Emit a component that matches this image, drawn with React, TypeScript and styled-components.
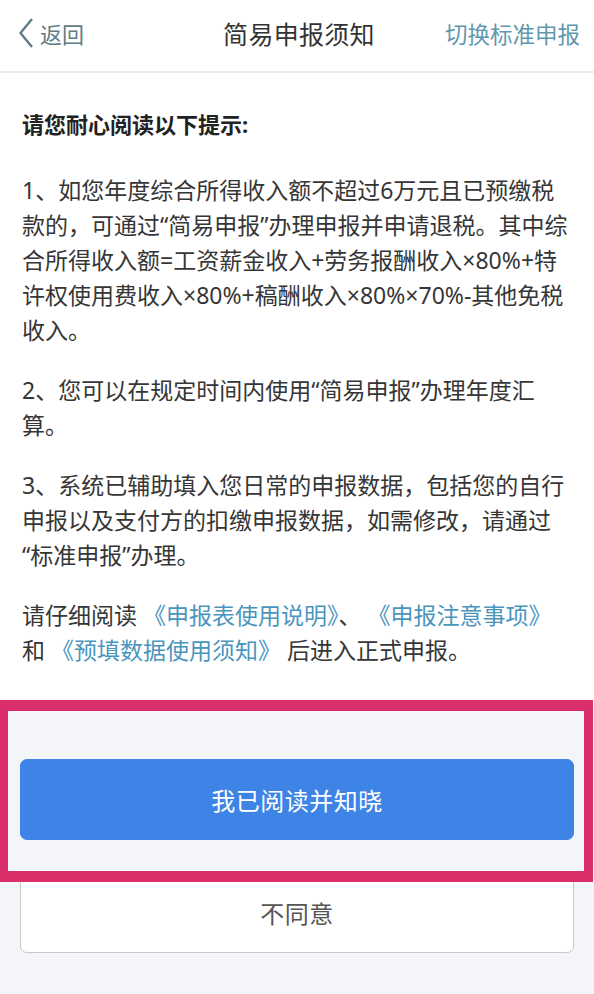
import React from 'react';
import styled, { createGlobalStyle } from 'styled-components';

const GlobalStyle = createGlobalStyle`
  html, body {
    margin: 0;
    padding: 0;
    background: #ffffff;
  }
  body {
    font-family: "Noto Sans", "Noto Sans CJK SC", sans-serif;
    -webkit-font-smoothing: antialiased;
  }
`;

const Page = styled.div`
  width: 594px;
  min-height: 994px;
  display: flex;
  flex-direction: column;
  background: #f4f5f9;
`;

const NavBar = styled.header`
  height: 73px;
  padding: 0 14px 5px 18px;
  box-sizing: border-box;
  display: grid;
  grid-template-columns: 1fr auto 1fr;
  align-items: center;
  background: #ffffff;
  border-bottom: 2px solid #ececec;
`;

const BackLink = styled.a`
  display: flex;
  align-items: center;
  gap: 6px;
  font-size: 22px;
  color: #5f7d86;
  text-decoration: none;
  justify-self: start;
`;

const Title = styled.h1`
  margin: 0;
  font-size: 25px;
  font-weight: 400;
  color: #333333;
  letter-spacing: 0.3px;
`;

const SwitchLink = styled.a`
  justify-self: end;
  font-size: 22.5px;
  color: #5f98ae;
  text-decoration: none;
`;

const Notice = styled.section`
  background: #ffffff;
  padding: 34px 22px 34px;
  color: #363636;
`;

const Heading = styled.h2`
  margin: 0 0 31px;
  font-size: 22px;
  line-height: 35px;
  font-weight: 700;
  color: #222222;
`;

const Paragraph = styled.p`
  margin: 0 0 25px;
  font-size: 23px;
  line-height: 35px;

  &:last-child {
    margin-bottom: 0;
  }
`;

const Line = styled.span`
  display: block;
  white-space: nowrap;
`;

const DocLink = styled.a`
  color: #4a95be;
  text-decoration: none;
`;

const Footer = styled.footer`
  position: relative;
  flex: 1;
  padding: 57px 20px 40px;
  display: flex;
  flex-direction: column;
  gap: 32px;
`;

const ActionButton = styled.button<{ $primary?: boolean }>`
  height: 81px;
  width: 100%;
  border-radius: 7px;
  font-family: inherit;
  font-size: 24px;
  letter-spacing: 0.5px;
  cursor: pointer;
  border: 1px solid ${(p) => (p.$primary ? '#3d84e6' : '#c8c8c8')};
  background: ${(p) => (p.$primary ? '#3d84e6' : '#ffffff')};
  color: ${(p) => (p.$primary ? '#ffffff' : '#555555')};
`;

// highlight frame drawn over the confirm button area
const Highlight = styled.div`
  position: absolute;
  top: -2px;
  left: 0;
  right: 1px;
  height: 182px;
  box-sizing: border-box;
  border: solid #db2f6c;
  border-width: 11px 9px 11px 8px;
  pointer-events: none;
`;

const Chevron = () => (
  <svg width="16" height="30" viewBox="0 0 16 30" fill="none">
    <polyline points="14,1 2.5,15 14,29" stroke="#5f7d86" strokeWidth="2.4" strokeLinejoin="round" />
  </svg>
);

const items: string[][] = [
  [
    '1、如您年度综合所得收入额不超过6万元且已预缴税',
    '款的，可通过“简易申报”办理申报并申请退税。其中综',
    '合所得收入额=工资薪金收入+劳务报酬收入×80%+特',
    '许权使用费收入×80%+稿酬收入×80%×70%-其他免税',
    '收入。',
  ],
  ['2、您可以在规定时间内使用“简易申报”办理年度汇', '算。'],
  [
    '3、系统已辅助填入您日常的申报数据，包括您的自行',
    '申报以及支付方的扣缴申报数据，如需修改，请通过',
    '“标准申报”办理。',
  ],
];

export default function App() {
  return (
    <>
      <GlobalStyle />
      <Page>
        <NavBar>
          <BackLink href="#">
            <Chevron />
            返回
          </BackLink>
          <Title>简易申报须知</Title>
          <SwitchLink href="#">切换标准申报</SwitchLink>
        </NavBar>

        <Notice>
          <Heading>请您耐心阅读以下提示:</Heading>
          {items.map((lines, i) => (
            <Paragraph key={i}>
              {lines.map((l, j) => (
                <Line key={j}>{l}</Line>
              ))}
            </Paragraph>
          ))}
          <Paragraph>
            <Line>
              请仔细阅读 <DocLink href="#">《申报表使用说明》</DocLink>、 <DocLink href="#">《申报注意事项》</DocLink>
            </Line>
            <Line>
              和 <DocLink href="#">《预填数据使用须知》</DocLink> 后进入正式申报。
            </Line>
          </Paragraph>
        </Notice>

        <Footer>
          <ActionButton $primary>我已阅读并知晓</ActionButton>
          <ActionButton>不同意</ActionButton>
          <Highlight />
        </Footer>
      </Page>
    </>
  );
}
